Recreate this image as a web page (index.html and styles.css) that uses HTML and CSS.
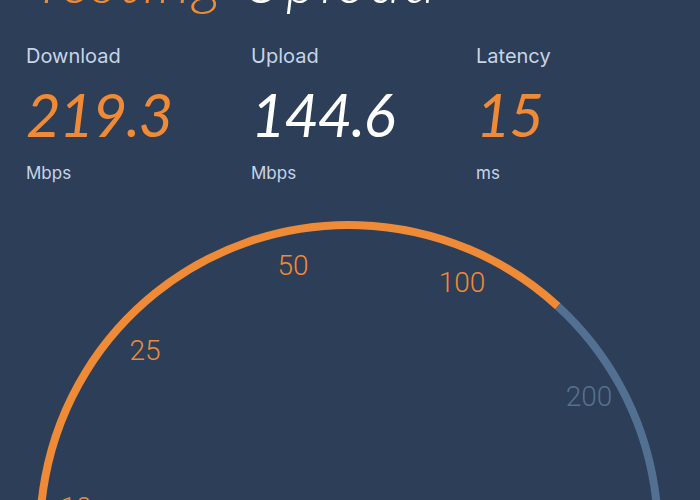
FILE: index.html
```html
<!DOCTYPE html>
<html>
<head>
<meta charset="utf-8">
<link rel="stylesheet" href="styles.css">
</head>
<body>
<div class="screen">
  <h1 class="title"><span class="accent">Testing</span> Upload</h1>
  <div class="stats">
    <div class="stat">
      <div class="label">Download</div>
      <div class="value accent">219.3</div>
      <div class="unit">Mbps</div>
    </div>
    <div class="stat">
      <div class="label">Upload</div>
      <div class="value">144.6</div>
      <div class="unit">Mbps</div>
    </div>
    <div class="stat">
      <div class="label">Latency</div>
      <div class="value accent">15</div>
      <div class="unit">ms</div>
    </div>
  </div>
  <svg class="gauge" width="700" height="300" viewBox="0 0 700 300">
    <path class="arc-done" d="M 81.4 488.5 A 309 309 0 0 1 557.8 106.2"/>
    <path class="arc-rest" d="M 557.8 106.2 A 309 309 0 0 1 616.6 488.5"/>
    <text class="tick done" x="293" y="75">50</text>
    <text class="tick done" x="145" y="160">25</text>
    <text class="tick done" x="462" y="92">100</text>
    <text class="tick rest" x="589" y="206">200</text>
    <text class="tick done" x="76" y="317">10</text>
  </svg>
</div>
</body>
</html>
```

FILE: styles.css
```css
html, body {
  margin: 0;
  padding: 0;
  background: #2c3e58;
}
.screen {
  width: 700px;
  height: 500px;
  overflow: hidden;
  background: #2c3e58;
  font-family: Inter, Roboto, "Liberation Sans", sans-serif;
}
.title {
  margin: -52px 0 0 0;
  height: 62px;
  padding-left: 32px;
  font-family: Lato, "Open Sans", sans-serif;
  font-size: 62px;
  line-height: 62px;
  font-weight: 300;
  font-style: italic;
  letter-spacing: 2.5px;
  color: #ffffff;
  white-space: nowrap;
}
.accent {
  color: #ef8a37;
}
.stats {
  display: grid;
  grid-template-columns: 225px 225px 225px;
  padding-left: 26px;
  margin-top: 34px;
}
.label {
  font-size: 20px;
  line-height: 24px;
  color: #c8d5e5;
}
.value {
  margin-top: 16px;
  font-family: Lato, "Open Sans", sans-serif;
  font-style: italic;
  font-weight: 400;
  font-size: 60px;
  line-height: 60px;
  letter-spacing: -1.5px;
  color: #ffffff;
}
.value.accent {
  color: #ef8a37;
}
.unit {
  margin-top: 18px;
  font-size: 17px;
  line-height: 22px;
  color: #c8d5e5;
}
.gauge {
  display: block;
  margin-top: 16px;
}
.arc-done {
  fill: none;
  stroke: #ef8a37;
  stroke-width: 8;
}
.arc-rest {
  fill: none;
  stroke: #527091;
  stroke-width: 8;
}
.tick {
  font-family: Roboto, "Liberation Sans", sans-serif;
  font-weight: 300;
  font-size: 28px;
  text-anchor: middle;
}
.tick.done {
  fill: #ef8a37;
}
.tick.rest {
  fill: #56718f;
}
```
